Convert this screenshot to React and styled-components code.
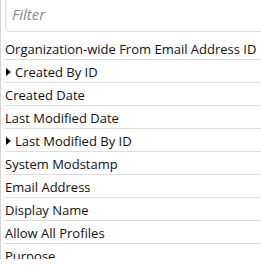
import styled, { createGlobalStyle } from "styled-components";

const fields = [
  { name: "Organization-wide From Email Address ID" },
  { name: "Created By ID", expandable: true },
  { name: "Created Date" },
  { name: "Last Modified Date" },
  { name: "Last Modified By ID", expandable: true },
  { name: "System Modstamp" },
  { name: "Email Address" },
  { name: "Display Name" },
  { name: "Allow All Profiles" },
  { name: "Purpose" },
];

const App = () => {
  return (
    <>
      <GlobalStyle />
      <Panel>
        <FilterInput placeholder="Filter" />
        <FieldList>
          {fields.map(({ name, expandable }) => (
            <FieldRow key={name}>
              {expandable && <Caret />}
              {name}
            </FieldRow>
          ))}
        </FieldList>
      </Panel>
    </>
  );
};

export default App;

const GlobalStyle = createGlobalStyle`
  body {
    margin: 0;
    background: #fff;
    overflow: hidden;
  }
`;

const Panel = styled.div`
  height: 265px;
  border-left: 1px solid #d4d4d4;
  padding-left: 4px;
  margin-top: -6px;
  font-family: "Open Sans", sans-serif;
  color: #111;
`;

const FilterInput = styled.input`
  display: block;
  box-sizing: border-box;
  width: 262px;
  height: 38px;
  margin: 0 0 5px;
  padding: 2px 6px 0;
  border: 1px solid #d9d9d9;
  border-radius: 5px;
  font-family: "Open Sans", sans-serif;
  font-size: 15px;
  font-style: italic;
  outline: none;

  &::placeholder {
    color: #8a8a8a;
  }
`;

const FieldList = styled.div`
  display: flex;
  flex-direction: column;
`;

const FieldRow = styled.div`
  display: flex;
  align-items: center;
  box-sizing: border-box;
  height: 23px;
  padding-top: 1px;
  border-bottom: 1px solid #dcdcdc;
  font-size: 13px;
  white-space: nowrap;
`;

const Caret = styled.span`
  width: 0;
  height: 0;
  margin: 0 4px 0 1px;
  border-top: 4px solid transparent;
  border-bottom: 4px solid transparent;
  border-left: 5px solid #000;
`;
